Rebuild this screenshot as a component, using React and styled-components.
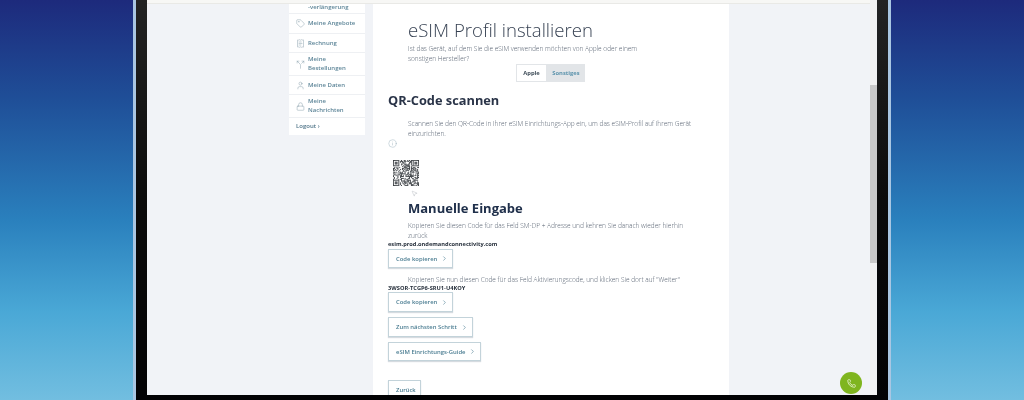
import React from "react";
import styled, { createGlobalStyle } from "styled-components";
import { Tag, ReceiptText, Split, User, Lock, Info, Phone, MousePointer2, ChevronRight } from "lucide-react";

const Global = createGlobalStyle`
  html, body { margin: 0; padding: 0; background: #000; }
  body { font-family: "Open Sans", "Noto Sans", sans-serif; }
`;
const Stage = styled.div`
  display: flex; width: 1024px; height: 400px; overflow: hidden;
  background: linear-gradient(180deg, #1d2a7c 0%, #1f4f98 25%, #2a80bd 55%, #4aa8d6 78%, #72bee0 100%);
`;
const Backdrop = styled.div`flex: ${p => p.$w ? `0 0 ${p.$w}px` : "1"};`;
const Laptop = styled.div`
  width: 758px; height: 400px; flex: none; box-sizing: border-box;
  padding: 0 11px 5px 11px;
  background: linear-gradient(180deg, #232323 0%, #0b0b0b 50%, #020204 100%);
  border-left: 3px solid #a9c6e2; border-right: 3px solid #a9c6e2;
  filter: blur(0.5px);
`;
const Screen = styled.div`
  position: relative; height: 100%; width: 730px; background: #f1f3f7;
  display: flex; flex-direction: column; overflow: hidden;
`;
const BrowserStrip = styled.div`
  height: 3px; flex: none; background: #f7f7f5; border-bottom: 1px solid #e9e9e6;
`;
const Viewport = styled.div`
  flex: 1; min-height: 0; display: flex; padding-left: 142px; overflow: hidden;
`;
const Sidebar = styled.nav`
  width: 76px; height: 131px; flex: none; background: #fff; display: flex; flex-direction: column;
`;
const NavRow = styled.div`
  display: flex; align-items: center; gap: 3px; box-sizing: border-box;
  height: ${p => p.$h}px; padding-left: 7px; border-bottom: 1px solid #eef0f3;
  font-size: 6px; line-height: 8.8px; font-weight: 600; color: #5d8598;
  svg { flex: none; color: #7f97a6; }
`;
const NavClipped = styled(NavRow)`padding-left: 19px; align-items: flex-end; padding-bottom: 1px;`;
const Logout = styled.div`
  font-size: 6px; font-weight: 600; color: #4f7488; padding: 4px 0 0 7px;
`;
const Main = styled.main`
  width: 356px; height: 100%; flex: none; margin-left: 8px; background: #fff;
  box-sizing: border-box; padding: 12px 0 0 15px; overflow: hidden;
`;
const Indented = styled.div`margin-left: 20px;`;
const Title = styled.h1`
  margin: 0; font-size: 18.6px; line-height: 28px; font-weight: 300; color: #364152;
`;
const Lead = styled.p`
  margin: ${p => p.$m || "0"}; width: ${p => p.$w || 288}px; font-size: 6.5px; line-height: 10px;
  font-weight: 300; color: #566170;
`;
const Segments = styled.div`
  display: flex; width: 69px; height: 18px; margin: 0 0 0 108px; background: #e2e5e8;
`;
const Segment = styled.div`
  flex: ${p => p.$on ? "0 0 29px" : "1"}; display: flex; align-items: center; justify-content: center;
  font-size: 5.8px; font-weight: 700; color: ${p => p.$on ? "#3e4c58" : "#5d94ad"};
  background: ${p => p.$on ? "#fff" : "transparent"};
  border: ${p => p.$on ? "1px solid #e2e5e8" : "0"};
`;
const H2 = styled.h2`
  margin: 8px 0 0; font-size: 12.8px; line-height: 20px; font-weight: 700; color: #2a3448;
`;
const InfoMark = styled.div`
  height: 8px; color: #86a0ae; line-height: 0;
`;
const Qr = styled.svg`display: block; width: 26px; height: 26px; margin: 13px 0 0 5px;`;
const H3 = styled.h3`
  margin: 13px 0 0 20px; font-size: 13px; line-height: 18px; font-weight: 700; color: #20304b;
`;
const Code = styled.div`
  font-size: 5.7px; line-height: 7px; font-weight: 700; color: #27303c; margin-top: ${p => p.$mt || 0}px;
`;
const Btn = styled.div`
  display: flex; align-items: center; gap: 4px; width: max-content; box-sizing: border-box;
  height: ${p => p.$h || 19}px; margin-top: ${p => p.$mt || 0}px; padding: 0 4px 0 7px;
  background: #fff; border: 1px solid #c3d3da; box-shadow: 0 1px 1px #d6dbe0;
  font-size: 5.9px; font-weight: 600; color: #4b7d92;
  svg { color: #4b7d92; }
`;
const Pointer = styled.div`
  position: absolute; left: 264px; top: 190px; color: #8e96a0; line-height: 0;
`;
const Fab = styled.div`
  position: absolute; left: 693px; top: 372px; width: 22px; height: 22px; border-radius: 50%;
  background: #7fb51f; color: #e3f1c8; display: flex; align-items: center; justify-content: center;
`;
const ScrollTrack = styled.div`
  position: absolute; right: 0; top: 0; bottom: 0; width: 7px; background: #f1f1f1; padding-top: 85px; box-sizing: border-box;
`;
const ScrollThumb = styled.div`width: 100%; height: 178px; background: #c9c9c9;`;

const qrCells = () => {
  const n = 29, out = [];
  const finder = (x, y) => x < 7 && y < 7 && (x === 0 || y === 0 || x === 6 || y === 6 || (x > 1 && x < 5 && y > 1 && y < 5));
  let s = 12345;
  for (let y = 0; y < n; y++) for (let x = 0; x < n; x++) {
    s = (s * 1103515245 + 12345) & 0x7fffffff;
    const inTL = x < 8 && y < 8, inTR = x > n - 9 && y < 8, inBL = x < 8 && y > n - 9;
    let on;
    if (inTL) on = finder(x, y);
    else if (inTR) on = finder(x - (n - 7), y);
    else if (inBL) on = finder(x, y - (n - 7));
    else on = (s >> 16) % 2 === 0;
    if (on) out.push(<rect key={x + "-" + y} x={x} y={y} width="1" height="1" />);
  }
  return out;
};

const Chevron = () => <ChevronRight size={7} strokeWidth={2} />;

export default function App() {
  return (
    <Stage>
      <Global />
      <Backdrop $w={133} />
      <Laptop>
        <Screen>
          <BrowserStrip />
          <Viewport>
            <Sidebar>
              <NavClipped $h={10}>-verlängerung</NavClipped>
              <NavRow $h={20}><Tag size={9} strokeWidth={1.2} />Meine Angebote</NavRow>
              <NavRow $h={19}><ReceiptText size={9} strokeWidth={1.2} />Rechnung</NavRow>
              <NavRow $h={23}><Split size={9} strokeWidth={1.2} /><span>Meine<br />Bestellungen</span></NavRow>
              <NavRow $h={19}><User size={9} strokeWidth={1.2} />Meine Daten</NavRow>
              <NavRow $h={23}><Lock size={9} strokeWidth={1.2} /><span>Meine<br />Nachrichten</span></NavRow>
              <Logout>Logout ›</Logout>
            </Sidebar>
            <Main>
              <Indented>
                <Title>eSIM Profil installieren</Title>
                <Lead $w={240}>Ist das Gerät, auf dem Sie die eSIM verwenden möchten von Apple oder einem sonstigen Hersteller?</Lead>
                <Segments><Segment $on>Apple</Segment><Segment>Sonstiges</Segment></Segments>
              </Indented>
              <H2>QR-Code scannen</H2>
              <Indented><Lead $m="9px 0 0">Scannen Sie den QR-Code in Ihrer eSIM Einrichtungs-App ein, um das eSIM-Profil auf Ihrem Gerät einzurichten.</Lead></Indented>
              <InfoMark><Info size={9} strokeWidth={1} /></InfoMark>
              <Qr viewBox="0 0 29 29" fill="#1a1f24" shapeRendering="geometricPrecision">{qrCells()}</Qr>
              <H3>Manuelle Eingabe</H3>
              <Indented><Lead $m="4px 0 0" $w={280}>Kopieren Sie diesen Code für das Feld SM-DP + Adresse und kehren Sie danach wieder hierhin zurück</Lead></Indented>
              <Code>esim.prod.ondemandconnectivity.com</Code>
              <Btn $mt={1}>Code kopieren <Chevron /></Btn>
              <Indented><Lead $m="7px 0 0" $w={300}>Kopieren Sie nun diesen Code für das Feld Aktivierungscode, und klicken Sie dort auf "Weiter"</Lead></Indented>
              <Code>3WSOR-TCGP6-SRU1-U4KOY</Code>
              <Btn $mt={0} $h={20}>Code kopieren <Chevron /></Btn>
              <Btn $mt={5} $h={20}>Zum nächsten Schritt <Chevron /></Btn>
              <Btn $mt={5} $h={19}>eSIM Einrichtungs-Guide <Chevron /></Btn>
              <Btn $mt={19} $h={20}>Zurück</Btn>
            </Main>
          </Viewport>
          <ScrollTrack><ScrollThumb /></ScrollTrack>
          <Pointer><MousePointer2 size={7} strokeWidth={1} /></Pointer>
          <Fab><Phone size={9} strokeWidth={2.4} /></Fab>
        </Screen>
      </Laptop>
      <Backdrop />
    </Stage>
  );
}
